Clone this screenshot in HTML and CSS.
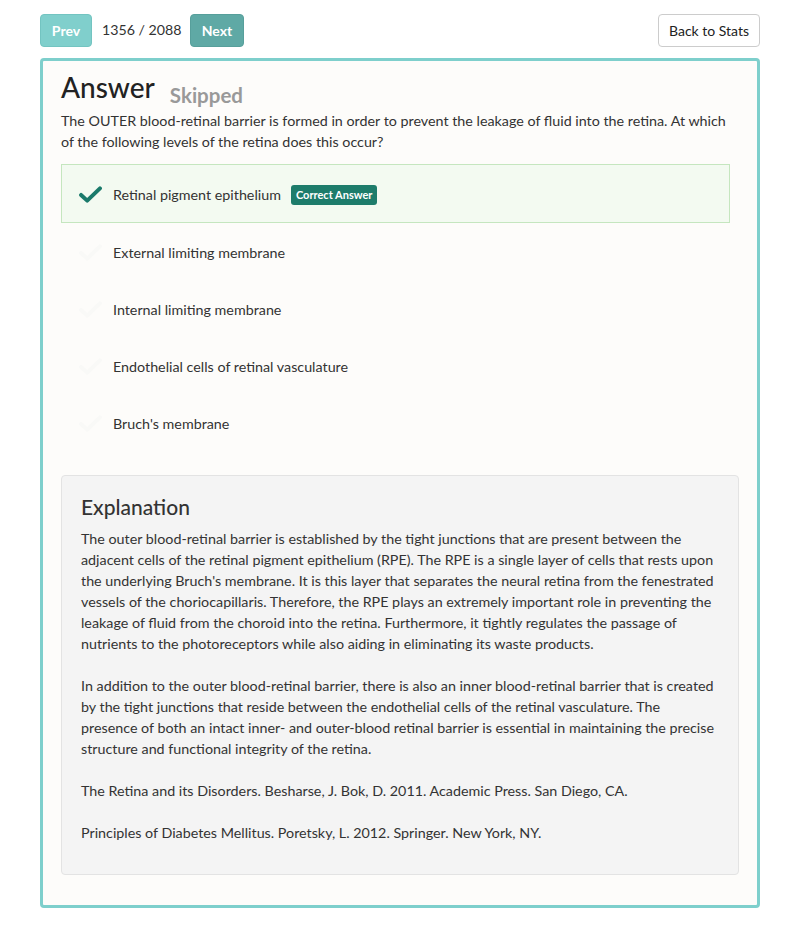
FILE: index.html
```html
<!DOCTYPE html>
<html>
<head>
<meta charset="utf-8">
<link rel="stylesheet" href="styles.css">
</head>
<body>
<div class="page">
  <div class="toolbar">
    <div class="nav">
      <button class="btn btn-prev">Prev</button>
      <span class="counter">1356 / 2088</span>
      <button class="btn btn-next">Next</button>
    </div>
    <button class="btn btn-back">Back to Stats</button>
  </div>
  <div class="card">
    <div class="title-row">
      <h1 class="title">Answer</h1>
      <span class="status">Skipped</span>
    </div>
    <p class="question">The OUTER blood-retinal barrier is formed in order to prevent the leakage of fluid into the retina. At which of the following levels of the retina does this occur?</p>
    <ul class="options">
      <li class="option correct">
        <svg class="check" viewBox="0 0 24 18" width="23" height="17"><path d="M2 9.5 L8.5 15.5 L22 2.5" fill="none" stroke="currentColor" stroke-width="4.2" stroke-linecap="round" stroke-linejoin="round"/></svg>
        <span>Retinal pigment epithelium</span>
        <span class="badge">Correct Answer</span>
      </li>
      <li class="option">
        <svg class="check faint" viewBox="0 0 24 18" width="23" height="17"><path d="M2 9.5 L8.5 15.5 L22 2.5" fill="none" stroke="currentColor" stroke-width="4.2" stroke-linecap="round" stroke-linejoin="round"/></svg>
        <span>External limiting membrane</span>
      </li>
      <li class="option">
        <svg class="check faint" viewBox="0 0 24 18" width="23" height="17"><path d="M2 9.5 L8.5 15.5 L22 2.5" fill="none" stroke="currentColor" stroke-width="4.2" stroke-linecap="round" stroke-linejoin="round"/></svg>
        <span>Internal limiting membrane</span>
      </li>
      <li class="option">
        <svg class="check faint" viewBox="0 0 24 18" width="23" height="17"><path d="M2 9.5 L8.5 15.5 L22 2.5" fill="none" stroke="currentColor" stroke-width="4.2" stroke-linecap="round" stroke-linejoin="round"/></svg>
        <span>Endothelial cells of retinal vasculature</span>
      </li>
      <li class="option">
        <svg class="check faint" viewBox="0 0 24 18" width="23" height="17"><path d="M2 9.5 L8.5 15.5 L22 2.5" fill="none" stroke="currentColor" stroke-width="4.2" stroke-linecap="round" stroke-linejoin="round"/></svg>
        <span>Bruch's membrane</span>
      </li>
    </ul>
    <div class="explanation">
      <h2 class="exp-title">Explanation</h2>
      <p>The outer blood-retinal barrier is established by the tight junctions that are present between the adjacent cells of the retinal pigment epithelium (RPE). The RPE is a single layer of cells that rests upon the underlying Bruch's membrane. It is this layer that separates the neural retina from the fenestrated vessels of the choriocapillaris. Therefore, the RPE plays an extremely important role in preventing the leakage of fluid from the choroid into the retina. Furthermore, it tightly regulates the passage of nutrients to the photoreceptors while also aiding in eliminating its waste products.</p>
      <p>In addition to the outer blood-retinal barrier, there is also an inner blood-retinal barrier that is created by the tight junctions that reside between the endothelial cells of the retinal vasculature. The presence of both an intact inner- and outer-blood retinal barrier is essential in maintaining the precise structure and functional integrity of the retina.</p>
      <p>The Retina and its Disorders. Besharse, J. Bok, D. 2011. Academic Press. San Diego, CA.</p>
      <p>Principles of Diabetes Mellitus. Poretsky, L. 2012. Springer. New York, NY.</p>
    </div>
  </div>
</div>
</body>
</html>
```
FILE: styles.css
```css
* { box-sizing: border-box; }
html, body { margin: 0; padding: 0; background: #ffffff; }
body {
  font-family: Lato, "Open Sans", sans-serif;
  color: #333333;
  font-size: 14px;
}
.page {
  width: 720px;
  margin: 0 40px;
  padding-top: 14px;
}
.toolbar {
  display: flex;
  justify-content: space-between;
  align-items: center;
  height: 33px;
}
.nav {
  display: flex;
  align-items: center;
}
.btn {
  font-family: inherit;
  height: 33px;
  border-radius: 4px;
  font-size: 14px;
  cursor: pointer;
}
.btn-prev, .btn-next {
  color: #ffffff;
  font-weight: bold;
  border: 1px solid transparent;
  padding: 0;
}
.btn-prev { background: #80cfcc; border-color: #73c4c1; width: 52px; }
.btn-next { background: #5fa9a5; border-color: #579f9b; width: 54px; }
.counter {
  margin: 0 10px;
  font-size: 14.2px;
  color: #333;
  white-space: nowrap;
  width: 78px;
  position: relative;
  top: -1px;
}
.btn-back {
  background: #ffffff;
  border: 1px solid #cccccc;
  color: #222;
  width: 102px;
  padding: 0;
}
.card {
  margin-top: 11px;
  border: 3px solid #7ecfcc;
  border-radius: 4px;
  background: #fdfcfa;
  padding: 9px 18px 30px 18px;
}
.title-row {
  display: flex;
  align-items: baseline;
}
.title {
  margin: 0;
  font-size: 28px;
  font-weight: 500;
  color: #222;
  line-height: 34px;
}
.status {
  margin-left: 15px;
  font-size: 20.5px;
  font-weight: bold;
  color: #999999;
  position: relative;
  top: 5px;
}
.question {
  margin: 6px 0 12px 0;
  font-size: 14.3px;
  line-height: 21px;
  color: #333;
}
.options {
  list-style: none;
  margin: 0;
  padding: 0;
  margin-right: 9px;
}
.option {
  display: flex;
  align-items: center;
  height: 57px;
  padding-left: 17px;
  padding-top: 2px;
  font-size: 14.3px;
  color: #333;
  border: 1px solid transparent;
}
.option.correct {
  height: 59px;
  background: #f3faf1;
  border-color: #c5e6bf;
}
.check {
  color: #1a7a6b;
  margin-right: 11px;
  flex: none;
}
.check.faint { color: #f9f9f7; }
.badge {
  margin-left: 10px;
  background: #1d7c6b;
  color: #fff;
  font-size: 11px;
  font-weight: bold;
  padding: 3px 5px;
  border-radius: 3px;
  line-height: 14px;
}
.explanation {
  margin-top: 24px;
  background: #f4f4f4;
  border: 1px solid #e3e3e3;
  border-radius: 4px;
  padding: 18px 22px 10px 19px;
}
.exp-title {
  margin: 0 0 8px 0;
  font-size: 21px;
  font-weight: 500;
  color: #333;
  line-height: 26px;
}
.explanation p {
  margin: 0 0 21px 0;
  font-size: 14.3px;
  line-height: 21px;
  color: #333;
}
```
